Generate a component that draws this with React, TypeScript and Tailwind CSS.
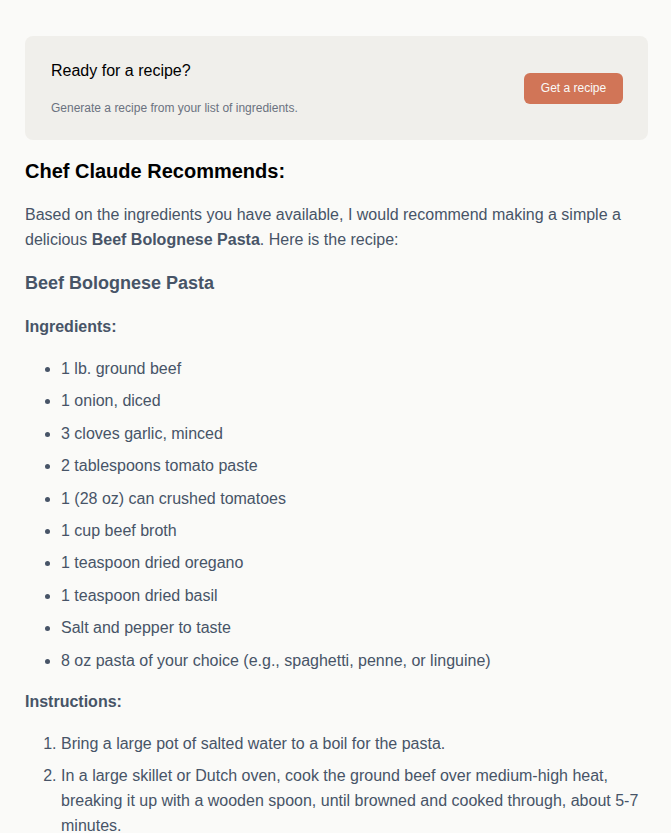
export default function App() {
  const ingredients = [
    "1 lb. ground beef",
    "1 onion, diced",
    "3 cloves garlic, minced",
    "2 tablespoons tomato paste",
    "1 (28 oz) can crushed tomatoes",
    "1 cup beef broth",
    "1 teaspoon dried oregano",
    "1 teaspoon dried basil",
    "Salt and pepper to taste",
    "8 oz pasta of your choice (e.g., spaghetti, penne, or linguine)",
  ];
  const steps = [
    "Bring a large pot of salted water to a boil for the pasta.",
    "In a large skillet or Dutch oven, cook the ground beef over medium-high heat, breaking it up with a wooden spoon, until browned and cooked through, about 5-7 minutes.",
  ];
  return (
    <div
      className="min-h-[833px] bg-[#fafaf8] pl-[25px] pr-[23px] pt-[36px] text-[#475467]"
      style={{ fontFamily: '"Liberation Sans", Arial, sans-serif' }}
    >
      <section className="flex items-center justify-between rounded-lg bg-[#f0efeb] pl-[26px] pr-[25px] pt-[23px] pb-[23px]">
        <div>
          <h3 className="text-[16px] leading-6 text-black">Ready for a recipe?</h3>
          <p className="mt-[16px] text-[12px] leading-[18px] text-[#6b7280]">
            Generate a recipe from your list of ingredients.
          </p>
        </div>
        <button className="h-[31px] w-[99px] rounded-md bg-[#d17557] text-[12px] text-[#fafaf8]">
          Get a recipe
        </button>
      </section>

      <h2 className="mt-[17px] text-[20px] font-bold leading-[28px] text-black">
        Chef Claude Recommends:
      </h2>
      <p className="mt-[17px] text-[16px] leading-[25px]">
        Based on the ingredients you have available, I would recommend making a simple a delicious{" "}
        <strong className="font-bold">Beef Bolognese Pasta</strong>. Here is the recipe:
      </p>
      <h3 className="mt-[18px] text-[18px] font-bold leading-[27px]">Beef Bolognese Pasta</h3>
      <h4 className="mt-[18px] text-[16px] font-bold leading-6">Ingredients:</h4>
      <ul className="mt-[18px] list-disc pl-[36px]">
        {ingredients.map((i) => (
          <li key={i} className="mb-[8.4px] text-[16px] leading-6">
            {i}
          </li>
        ))}
      </ul>
      <h4 className="mt-[17px] text-[16px] font-bold leading-6">Instructions:</h4>
      <ol className="mt-[17px] list-decimal pl-[36px]">
        {steps.map((s) => (
          <li key={s} className="mb-[7.5px] text-[16px] leading-[25px]">
            {s}
          </li>
        ))}
      </ol>
    </div>
  );
}
